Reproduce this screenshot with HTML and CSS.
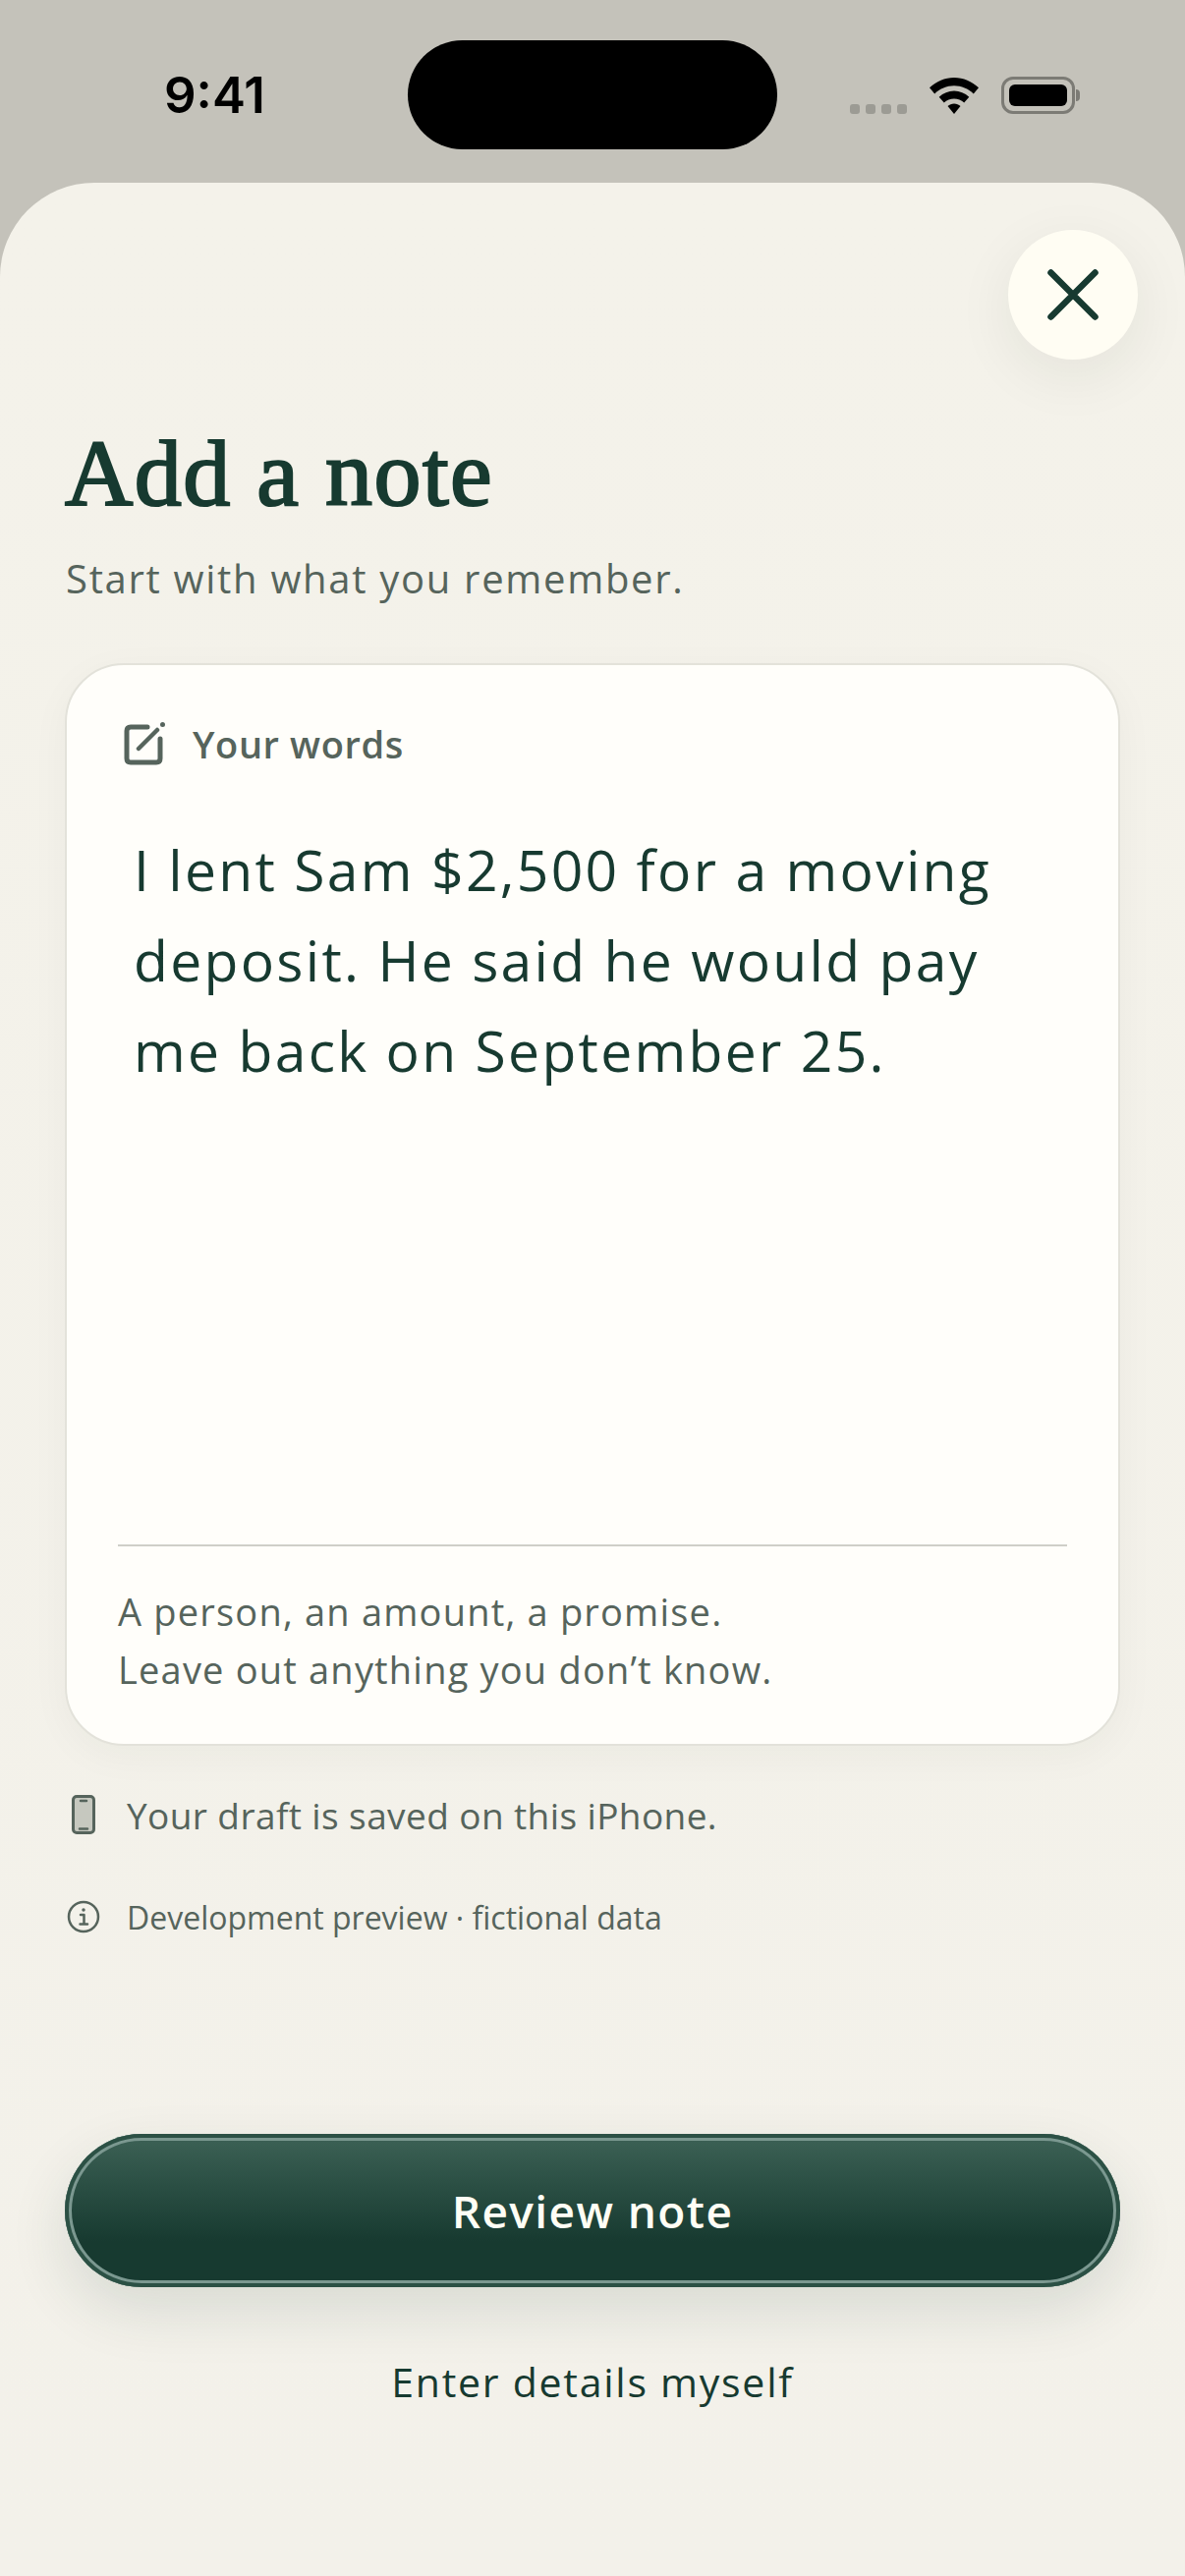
FILE: index.html
```html
<!DOCTYPE html>
<html lang="en">
<head>
    <meta charset="UTF-8">
    <meta name="viewport" content="width=device-width, initial-scale=1.0">
    <title>Add a note</title>
    <link rel="stylesheet" href="styles.css">
</head>
<body>
    <div class="status-bar">
        <div class="status-time">9:41</div>
        <div class="island"></div>
        <div class="status-icons">
            <div class="signal"><span></span><span></span><span></span><span></span></div>
            <svg class="wifi" width="50" height="37" viewBox="0 0 50 37">
                <path d="M25 0C34.500 0 43 3.800 50 10.300L44.800 16.400C39.500 11.300 32.500 8.300 25 8.300S10.500 11.300 5.200 16.400L0 10.300C7 3.800 15.500 0 25 0Z"/>
                <path d="M25 13.500C30.800 13.500 36 15.800 40.300 19.700L35.200 25.600C32.400 23 28.800 21.500 25 21.500S17.600 23 14.800 25.600L9.700 19.700C14 15.800 19.200 13.500 25 13.500Z"/>
                <path d="M25 26.500C27.500 26.500 29.700 27.400 31.500 29L25 37L18.500 29C20.300 27.400 22.500 26.500 25 26.500Z"/>
            </svg>
            <div class="battery"><div class="battery-fill"></div></div>
            <div class="battery-nub"></div>
        </div>
    </div>

    <main class="sheet">
        <button class="close-btn" aria-label="Close">
            <svg width="56" height="56" viewBox="0 0 56 56" fill="none" stroke="#173a30" stroke-width="6.500" stroke-linecap="round">
                <path d="M5.500 5.500L50.500 50.500M50.500 5.500L5.500 50.500"/>
            </svg>
        </button>

        <h1 class="title">Add a note</h1>
        <p class="subtitle">Start with what you remember.</p>

        <section class="card">
            <div class="card-label">
                <svg width="44" height="44" viewBox="0 0 44 44" fill="none" stroke="#56645c" stroke-width="5" stroke-linecap="round" stroke-linejoin="round">
                    <path d="M24 5H7C4.500 5 3 6.500 3 9V37C3 39.500 4.500 41 7 41H33C35.500 41 37 39.500 37 37V17"/>
                    <path d="M15 27L34 8" stroke-width="4.500"/>
                    <circle cx="39.500" cy="2.500" r="1" fill="#56645c" stroke-width="3"/>
                </svg>
                <span>Your words</span>
            </div>
            <p class="card-text">I lent Sam $2,500 for a moving deposit. He said he would pay me back on September 25.</p>
            <div class="card-foot">
                A person, an amount, a promise.<br>
                Leave out anything you don’t know.
            </div>
        </section>

        <div class="note-row note-draft">
            <svg class="note-icon" width="24" height="40" viewBox="0 0 24 40">
                <rect x="1.500" y="1.500" width="21" height="37" rx="3.500" fill="#c6c8bf" stroke="#56645c" stroke-width="3"/>
                <path d="M9 6H15M8 34.500H16" stroke="#56645c" stroke-width="2.500" stroke-linecap="round"/>
            </svg>
            <span>Your draft is saved on this iPhone.</span>
        </div>
        <div class="note-row note-info">
            <svg class="note-icon" width="34" height="34" viewBox="0 0 34 34" fill="none" stroke="#56645c" stroke-width="2.500">
                <circle cx="17" cy="17" r="15"/>
                <path d="M14 15H17.500V24M13.500 24.500H21" stroke-linecap="round" stroke-linejoin="round"/>
                <circle cx="17" cy="10" r="1" fill="#56645c" stroke-width="1.500"/>
            </svg>
            <span>Development preview · fictional data</span>
        </div>

        <div class="actions">
            <button class="primary-btn">Review note</button>
            <button class="link-btn">Enter details myself</button>
        </div>
    </main>
</body>
</html>
```

FILE: styles.css
```css
* {
    box-sizing: border-box;
}
html, body {
    margin: 0;
    height: 100%;
}
body {
    width: 1206px;
    height: 2622px;
    overflow: hidden;
    background: #c4c2ba;
    font-family: "Open Sans", sans-serif;
    color: #56645c;
    display: flex;
    flex-direction: column;
}
.status-bar {
    height: 186px;
    flex: none;
    display: grid;
    grid-template-columns: 415px 376px 1fr;
    padding-top: 41px;
    align-items: start;
}
.status-time {
    font-family: Inter, sans-serif;
    font-size: 51px;
    font-weight: 600;
    line-height: 111px;
    color: #000;
    padding-left: 167px;
}
.island {
    height: 111px;
    border-radius: 56px;
    background: #000;
}
.status-icons {
    display: flex;
    align-items: flex-end;
    height: 75px;
    padding-left: 74px;
}
.signal {
    display: flex;
    gap: 6px;
    margin-right: 23px;
}
.signal span {
    width: 10px;
    height: 10px;
    border-radius: 3px;
    background: #9c9b94;
}
.wifi {
    fill: #000;
    margin-right: 23px;
}
.battery {
    width: 75px;
    height: 38px;
    padding: 5px;
    border: 3px solid #7c7b75;
    border-radius: 12px;
}
.battery-fill {
    height: 100%;
    border-radius: 6px;
    background: #000;
}
.battery-nub {
    width: 4px;
    height: 12px;
    margin: 0 0 13px 1px;
    border-radius: 0 4px 4px 0;
    background: #7c7b75;
}
.sheet {
    position: relative;
    flex: 1;
    padding: 246px 66px 0;
    border-radius: 96px 96px 0 0;
    background: linear-gradient(#f4f2ea, #f3f1ea);
}
.close-btn {
    position: absolute;
    top: 48px;
    right: 48px;
    width: 132px;
    height: 132px;
    padding: 0;
    border: 0;
    border-radius: 50%;
    background: #fffdf3;
    box-shadow: 0 16px 60px rgba(30, 40, 30, 0.07);
    display: flex;
    align-items: center;
    justify-content: center;
}
.title {
    margin: 0;
    font-family: "Liberation Serif", serif;
    font-size: 96px;
    font-weight: 400;
    -webkit-text-stroke: 2.2px #173a30;
    letter-spacing: 1.5px;
    line-height: 100px;
    color: #173a30;
}
.subtitle {
    margin: 29px 0 0;
    padding-left: 1px;
    font-size: 40px;
    letter-spacing: 1.7px;
    line-height: 56px;
}
.card {
    margin-top: 58px;
    height: 1102px;
    border: 2px solid #e3e2da;
    border-radius: 60px;
    background: #fffefa;
    box-shadow: 0 10px 40px rgba(30, 40, 30, 0.04);
    display: flex;
    flex-direction: column;
    padding: 0 52px 0 52px;
}
.card-label {
    display: flex;
    align-items: center;
    gap: 26px;
    margin-top: 55px;
    padding-left: 6px;
    font-size: 38px;
    font-weight: 600;
    letter-spacing: 0.6px;
    line-height: 50px;
}
.card-text {
    flex: 1;
    margin: 57px 0 0;
    padding-left: 16px;
    font-size: 57px;
    letter-spacing: 2.300px;
    line-height: 92px;
    color: #173a30;
}
.card-foot {
    height: 203px;
    padding-top: 37px;
    border-top: 2px solid #cfcfc8;
    font-size: 38px;
    letter-spacing: 1.2px;
    line-height: 59px;
}
.note-row {
    display: flex;
    align-items: center;
}
.note-draft {
    margin-top: 45px;
    height: 50px;
    font-size: 37px;
    letter-spacing: 0.4px;
}
.note-info {
    margin-top: 54px;
    height: 50px;
    font-size: 32px;
}
.note-icon {
    flex: none;
    margin-left: 2px;
    margin-right: 27px;
}
.note-draft .note-icon {
    margin-left: 7px;
    margin-right: 32px;
}
.actions {
    margin-top: 196px;
    display: flex;
    flex-direction: column;
    align-items: center;
}
.primary-btn {
    width: 1074px;
    height: 156px;
    border: 0;
    border-radius: 78px;
    background: linear-gradient(#3d6256, #173a30 70%);
    box-shadow: inset 0 0 0 4px #2c5145, inset 0 0 0 7px #7b9890, 0 24px 60px rgba(23, 58, 48, 0.12);
    color: #fffef5;
    font-family: "Open Sans", sans-serif;
    font-size: 46px;
    font-weight: 600;
    letter-spacing: 1.4px;
}
.link-btn {
    margin-top: 68px;
    padding: 0;
    border: 0;
    background: none;
    color: #173a30;
    font-family: "Open Sans", sans-serif;
    font-size: 41px;
    letter-spacing: 1.75px;
    line-height: 56px;
}
```
